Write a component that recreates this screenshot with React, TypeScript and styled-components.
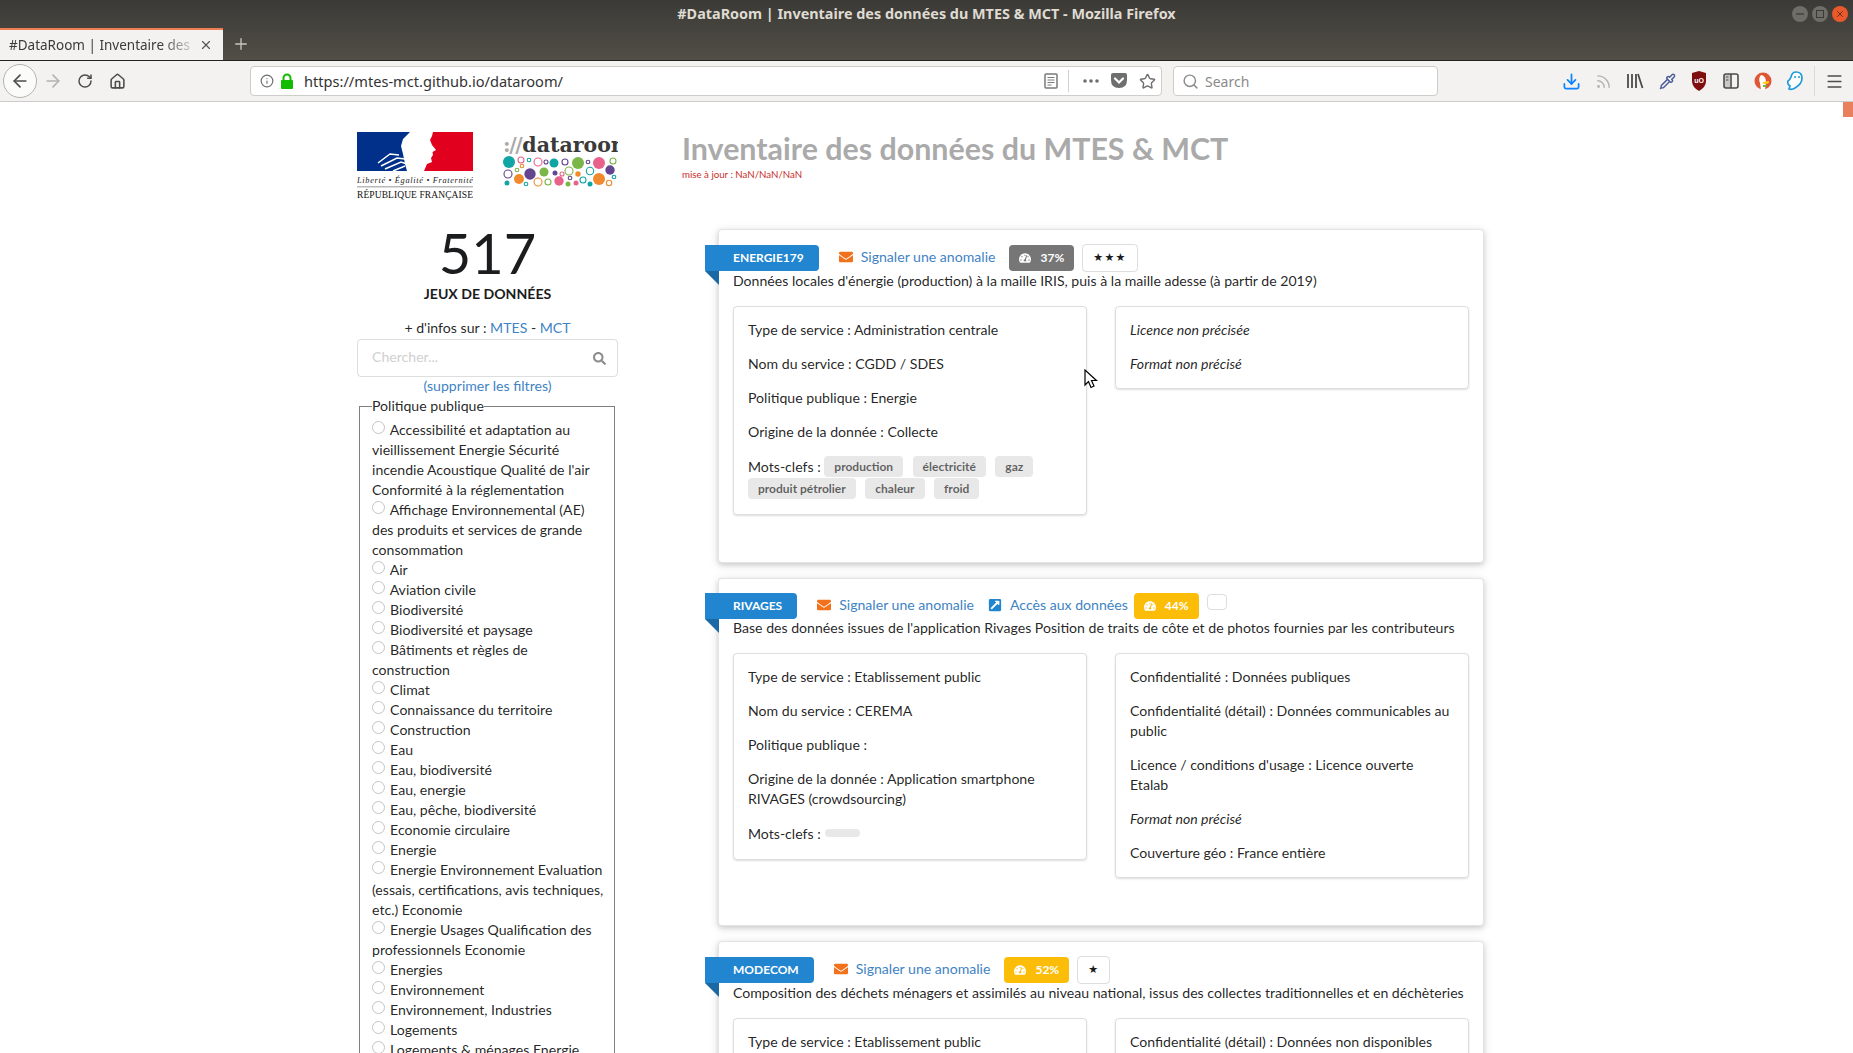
import React from 'react';
import styled, { createGlobalStyle } from 'styled-components';
import { ArrowLeft, ArrowRight, RotateCw, Home, Info, Search, Star, Rss, Menu, X, Plus, Pipette, Download } from 'lucide-react';
import { FaEnvelope, FaExternalLinkSquareAlt, FaSearch, FaTachometerAlt } from 'react-icons/fa';

const GlobalStyle = createGlobalStyle`
  html, body { margin: 0; padding: 0; height: 100%; overflow: hidden; background: #fff; }
  body {
    font-family: Lato, "Helvetica Neue", Arial, sans-serif;
    font-size: 14.1px;
    line-height: 20px;
    color: rgba(0, 0, 0, 0.87);
    text-rendering: optimizeLegibility;
    font-variant-ligatures: common-ligatures;
  }
  * { box-sizing: border-box; }
`;

const Window = styled.div`
  height: 100vh;
  display: flex;
  flex-direction: column;
  overflow: hidden;
`;

const TitleBar = styled.div`
  height: 61px;
  flex: none;
  background: linear-gradient(180deg, #3b3a36 0%, #514e47 100%);
  border-bottom: 1px solid #24231f;
  display: flex;
  flex-direction: column;
`;

const WindowTitleRow = styled.div`
  height: 28px;
  flex: none;
  display: flex;
  align-items: center;
  justify-content: center;
  position: relative;
  font-family: "Noto Sans", sans-serif;
  font-weight: 700;
  font-size: 14.4px;
  color: #dfdbd2;
`;

const WindowButtons = styled.div`
  position: absolute;
  right: 5px;
  top: 6px;
  display: flex;
  gap: 4px;
`;

const WindowButton = styled.span<{ $close?: boolean }>`
  width: 16px;
  height: 16px;
  border-radius: 50%;
  display: flex;
  align-items: center;
  justify-content: center;
  background: ${(p) => (p.$close ? '#e9592b' : '#6f6d67')};
  color: ${(p) => (p.$close ? '#5a2410' : '#3a3934')};
`;

const TabStrip = styled.div`
  flex: 1;
  display: flex;
  align-items: stretch;
`;

const Tab = styled.div`
  width: 223px;
  border-top: 2px solid #f07e54;
  background: #f3f2f0;
  display: flex;
  align-items: center;
  padding-left: 9px;
  font-family: "Noto Sans", sans-serif;
  font-size: 13.5px;
  color: #3c3b37;
  position: relative;
`;

const TabText = styled.span`
  width: 190px;
  white-space: nowrap;
  overflow: hidden;
  -webkit-mask-image: linear-gradient(90deg, #000 80%, transparent 100%);
  mask-image: linear-gradient(90deg, #000 80%, transparent 100%);
`;

const NewTab = styled.span`
  width: 36px;
  display: flex;
  align-items: center;
  justify-content: center;
  color: #c9c6be;
`;

const Toolbar = styled.div`
  height: 41px;
  flex: none;
  background: #f3f2f0;
  border-bottom: 1px solid #ccc;
  display: flex;
  align-items: center;
  padding-left: 3px;
  color: #4c4c4c;
`;

const BackButton = styled.span`
  width: 34px;
  height: 34px;
  border-radius: 50%;
  border: 1px solid #b5b3b0;
  background: #fbfbfa;
  display: flex;
  align-items: center;
  justify-content: center;
`;

const Slot = styled.span<{ $muted?: boolean; $blue?: boolean }>`
  width: 32px;
  height: 32px;
  flex: none;
  display: flex;
  align-items: center;
  justify-content: center;
  color: ${(p) => (p.$blue ? '#0a84ff' : p.$muted ? '#b5b3b0' : '#4c4c4c')};
`;

const UrlBar = styled.div`
  width: 912px;
  height: 30px;
  margin-left: 117px;
  background: #fff;
  border: 1px solid #cfcdca;
  border-radius: 4px;
  display: flex;
  align-items: center;
  padding-left: 9px;
  font-family: "Noto Sans", sans-serif;
  font-size: 14.6px;
  color: #333;
`;

const UrlText = styled.span`
  margin-left: 4px;
  flex: 1;
`;

const UrlIcon = styled.span<{ $w: number }>`
  width: ${(p) => p.$w}px;
  flex: none;
  display: flex;
  align-items: center;
  justify-content: center;
  color: #6f6f6f;
`;

const UrlSeparator = styled.span`
  width: 1px;
  height: 22px;
  margin: 0 8px;
  background: #d3d1ce;
`;

const SearchBar = styled.div`
  width: 265px;
  height: 30px;
  margin-left: 11px;
  background: #fff;
  border: 1px solid #cfcdca;
  border-radius: 4px;
  display: flex;
  align-items: center;
  gap: 6px;
  padding: 1px 0 0 8px;
  font-family: "Noto Sans", sans-serif;
  font-size: 14px;
  color: #8a8a8a;
`;

const ToolbarIcons = styled.div`
  margin-left: 117px;
  display: flex;
  align-items: center;
`;

const ToolbarSeparator = styled.span`
  width: 1px;
  height: 30px;
  margin: 0 3px 0 3px;
  background: #dcdad7;
`;

const Page = styled.div`
  flex: 1;
  min-height: 0;
  overflow: hidden;
  position: relative;
  display: flex;
  align-items: flex-start;
  padding: 30px 0 0 357px;
`;

const ScrollThumb = styled.div`
  position: absolute;
  right: 0;
  top: 0;
  width: 10px;
  height: 15px;
  background: #e8805e;
`;

const PointerArrow = styled.svg`
  position: absolute;
  left: 1084px;
  top: 267px;
`;

const Sidebar = styled.aside`
  width: 261px;
  flex: none;
`;

const LogoRow = styled.div`
  height: 69px;
  display: flex;
  gap: 30px;
`;

const DataroomLogo = styled.div`
  width: 115px;
  overflow: hidden;
`;

const DataroomName = styled.div`
  font-family: "DejaVu Serif", serif;
  font-weight: 700;
  font-size: 20.5px;
  line-height: 24px;
  padding-top: 1px;
  margin-bottom: -1px;
  white-space: nowrap;
  color: #3a3a3a;
  span { color: #aaa; letter-spacing: -1.4px; margin-right: 1px; }
`;

const StatValue = styled.div`
  margin-top: 24px;
  text-align: center;
  font-size: 56px;
  line-height: 56px;
  color: #1b1c1d;
`;

const StatLabel = styled.div`
  margin-top: 3px;
  text-align: center;
  font-weight: 700;
  line-height: 20px;
  color: #1b1c1d;
`;

const InfoLine = styled.div`
  margin-top: 14px;
  text-align: center;
`;

const Anchor = styled.a`
  color: #4183c4;
  text-decoration: none;
`;

const SearchField = styled.div`
  margin-top: 1px;
  height: 38px;
  border: 1px solid rgba(34, 36, 38, 0.15);
  border-radius: 4px;
  display: flex;
  align-items: center;
  justify-content: space-between;
  padding: 0 11px 0 14px;
  color: #8d8d8d;
`;

const Placeholder = styled.span`
  margin-top: -2px;
  color: #d0d0d0;
`;

const ClearFilters = styled.div`
  margin-top: -1px;
  text-align: center;
`;

const FilterSet = styled.fieldset`
  margin: 0 3px 0 2px;
  padding: 4px 10px 0 12px;
  border: 1px solid #808080;
  border-bottom: none;
  min-width: 0;
`;

const FilterLegend = styled.legend`
  padding: 0;
  line-height: 20px;
`;

const FilterLabel = styled.label`
  display: block;
`;

const Radio = styled.input.attrs({ type: 'radio' })`
  appearance: none;
  width: 13px;
  height: 13px;
  margin: 0 1.5px 0 0;
  border: 1px solid #c4c4c4;
  border-radius: 50%;
  background: #fff;
  vertical-align: 1px;
`;

const Main = styled.main`
  margin-left: 64px;
  width: 801px;
  flex: none;
`;

const PageTitle = styled.h1`
  margin: -2px 0 0;
  font-size: 30.4px;
  line-height: 36px;
  font-weight: 700;
  color: #aaa;
  white-space: nowrap;
`;

const Updated = styled.div`
  margin-top: 2px;
  font-size: 9.7px;
  line-height: 12px;
  color: #c9302c;
`;

const CardList = styled.div`
  margin: 49px 0 0 36px;
  display: flex;
  flex-direction: column;
  gap: 15px;
`;

const Card = styled.section`
  background: #fff;
  border-radius: 4px;
  border: 1px solid rgba(34, 36, 38, 0.12);
  box-shadow: 0 2px 4px 0 rgba(34, 36, 38, 0.12), 0 2px 10px 0 rgba(34, 36, 38, 0.15);
  padding: 14px 14px 47px;
  width: 766px;
`;

const CardHeader = styled.div`
  display: flex;
  align-items: center;
`;

const Ribbon = styled.div`
  position: relative;
  flex: none;
  margin: 0 20px 0 -28px;
  height: 26px;
  padding: 0 15px 0 28px;
  display: flex;
  align-items: center;
  background: #2185d0;
  color: #fff;
  font-size: 12px;
  font-weight: 700;
  border-radius: 0 4px 4px 0;

  &::after {
    content: '';
    position: absolute;
    left: 0;
    top: 100%;
    border-style: solid;
    border-width: 0 14px 14px 0;
    border-color: transparent #1a69a4 transparent transparent;
  }
`;

const HeaderLink = styled.a<{ $tight?: boolean }>`
  display: flex;
  align-items: center;
  gap: 8px;
  margin-top: -2px;
  margin-right: ${(p) => (p.$tight ? 6 : 14)}px;
  color: #4183c4;
  text-decoration: none;
  white-space: nowrap;
`;

const ScoreLabel = styled.span<{ $level: 'low' | 'mid' }>`
  height: 26px;
  padding: 0 10px;
  display: flex;
  align-items: center;
  gap: 9px;
  margin-right: 8px;
  border-radius: 4px;
  font-size: 12px;
  font-weight: 700;
  color: #fff;
  background: ${(p) => (p.$level === 'low' ? '#767676' : '#fbbd08')};
`;

const StarBox = styled.span`
  height: 28px;
  padding: 0 10px;
  display: flex;
  align-items: center;
  border: 1px solid rgba(34, 36, 38, 0.15);
  border-radius: 4px;
  font-size: 11px;
  letter-spacing: 1.3px;
  font-family: "DejaVu Sans", sans-serif;
  color: #1b1c1d;
`;

const EmptyStarBox = styled.span`
  width: 20px;
  height: 16px;
  align-self: flex-start;
  margin-top: 1px;
  border: 1px solid rgba(34, 36, 38, 0.15);
  border-radius: 4px;
`;

const Description = styled.div`
  margin-top: -1px;
  white-space: nowrap;
`;

const Panels = styled.div`
  margin-top: 15px;
  display: grid;
  grid-template-columns: 354px 354px;
  gap: 28px;
  align-items: start;
`;

const Panel = styled.div`
  border: 1px solid rgba(34, 36, 38, 0.15);
  border-radius: 4px;
  box-shadow: 0 1px 2px 0 rgba(34, 36, 38, 0.15);
  padding: 13px 14px 14px;
`;

const Line = styled.p<{ $italic?: boolean }>`
  margin: 0 0 14px;
  font-style: ${(p) => (p.$italic ? 'italic' : 'normal')};
  &:last-child { margin-bottom: 0; }
`;

const TagLine = styled.div`
  line-height: 22px;
`;

const Tag = styled.span<{ $empty?: boolean }>`
  display: inline-block;
  vertical-align: top;
  height: ${(p) => (p.$empty ? '8px' : '21px')};
  width: ${(p) => (p.$empty ? '35px' : 'auto')};
  margin: ${(p) => (p.$empty ? '6px 10px 0 1px' : '0 9.5px 1px 0')};
  padding: 0 10px;
  line-height: 21px;
  border-radius: 4px;
  background: #e8e8e8;
  color: rgba(0, 0, 0, 0.6);
  font-size: 12px;
  font-weight: 700;
`;

const FILTERS = [
  'Accessibilité et adaptation au vieillissement Energie Sécurité incendie Acoustique Qualité de l\'air Conformité à la réglementation',
  'Affichage Environnemental (AE) des produits et services de grande consommation',
  'Air',
  'Aviation civile',
  'Biodiversité',
  'Biodiversité et paysage',
  'Bâtiments et règles de construction',
  'Climat',
  'Connaissance du territoire',
  'Construction',
  'Eau',
  'Eau, biodiversité',
  'Eau, energie',
  'Eau, pêche, biodiversité',
  'Economie circulaire',
  'Energie',
  'Energie Environnement Evaluation (essais, certifications, avis techniques, etc.) Economie',
  'Energie Usages Qualification des professionnels Economie',
  'Energies',
  'Environnement',
  'Environnement, Industries',
  'Logements',
  'Logements & ménages Energie',
];

// x, y, r in the logo's pixels; f = filled, otherwise a ring
const DOTS: [number, number, number, string, boolean][] = [
  [6, 6, 6, '#12a5a5', true], [18, 4, 3, '#e9628b', false], [26, 4, 1.8, '#12a5a5', false], [35, 6, 4, '#e9628b', false],
  [43, 6, 2, '#64458f', false], [51, 7, 4.5, '#12a5a5', true], [62, 6, 3, '#64458f', false], [75, 7, 6, '#7ab648', true],
  [85, 6, 1.8, '#64458f', false], [96, 7, 6, '#e9628b', true], [110, 5, 3, '#7ab648', false], [5, 18, 4, '#64458f', false],
  [14, 14, 1.8, '#7ab648', false], [19, 10, 1.8, '#f08a2d', false], [27, 18, 5.7, '#64458f', true], [41, 16, 4.5, '#7ab648', true],
  [52, 17, 2.5, '#64458f', true], [59, 18, 2, '#e9628b', false], [66, 15, 4, '#7ab648', false], [75, 18, 2.7, '#f08a2d', true],
  [87, 15, 3.7, '#12a5a5', false], [107, 14, 4.7, '#64458f', true], [4, 27, 2.5, '#12a5a5', true], [16, 23, 5, '#f08a2d', true],
  [23, 28, 1.8, '#12a5a5', false], [35, 26, 4, '#f08a2d', false], [45, 26, 3, '#7ab648', false], [56, 25, 4.7, '#e9628b', true],
  [67, 22, 1.8, '#64458f', false], [65, 28, 2.5, '#7ab648', true], [73, 27, 2.5, '#e9628b', true], [80, 24, 3, '#12a5a5', false],
  [87, 28, 2.5, '#12a5a5', true], [96, 23, 6, '#f08a2d', true], [111, 21, 1.8, '#12a5a5', false], [106, 27, 2.7, '#f08a2d', false],
];

const Marianne = () => (
  <svg width="116" height="69" viewBox="0 0 116 69">
    <rect x="0" y="0" width="60" height="39" fill="#00308a" />
    <rect x="60" y="0" width="56" height="39" fill="#e2001f" />
    <path d="M53 0 H76 L75 4 L73 8 L75 13 L79 18 L75.500 20 L76 23 L74 26 L75 30 L70 32 L67 39 H50 L48 32 L46 22 L44 14 L46 7 Z" fill="#fff" />
    <path d="M21 31 L33 22 L42 23 M24 34 L40 26 L48 27 M28 37 L44 30 L50 32 M36 39 L48 34" stroke="#fff" strokeWidth="1.500" fill="none" />
    <text x="0" y="51" fontFamily="'Liberation Serif', serif" fontStyle="italic" fontSize="8.300" textLength="116" fill="#222">Liberté • Égalité • Fraternité</text>
    <rect x="0" y="54" width="116" height="1.500" fill="#b9b9b9" />
    <text x="0" y="66" fontFamily="'Liberation Serif', serif" fontSize="9.500" textLength="116" fill="#111">RÉPUBLIQUE FRANÇAISE</text>
  </svg>
);

const Dots = () => (
  <svg width="115" height="32" viewBox="0 0 115 32">
    {DOTS.map(([x, y, r, c, f], i) => (
      <circle key={i} cx={x} cy={y} r={r} fill={f ? c : 'none'} stroke={f ? 'none' : c} strokeWidth={f ? 0 : 1.100} />
    ))}
  </svg>
);

const LockIcon = () => (
  <svg width="14" height="16" viewBox="0 0 14 16">
    <path d="M3.500 8 V5 A3.500 3.500 0 0 1 10.500 5 V8" fill="none" stroke="#12bc00" strokeWidth="2" />
    <rect x="1" y="7" width="12" height="9" rx="1" fill="#12bc00" />
  </svg>
);

const ReaderIcon = () => (
  <svg width="14" height="16" viewBox="0 0 14 16">
    <rect x="1" y="1" width="12" height="14" rx="1" fill="none" stroke="#7a7a7a" strokeWidth="1.500" />
    <path d="M3.500 4.500h7M3.500 7h7M3.500 9.500h7M3.500 12h4" stroke="#7a7a7a" strokeWidth="1" />
  </svg>
);

const PocketIcon = () => (
  <svg width="18" height="16" viewBox="0 0 18 16">
    <path d="M1 1.500 Q1 0 3 0 H15 Q17 0 17 1.500 V7 Q17 15 9 15 Q1 15 1 7 Z" fill="#6f6f6f" />
    <path d="M5 5.500 L9 9.500 L13 5.500" fill="none" stroke="#fff" strokeWidth="2.200" strokeLinecap="round" />
  </svg>
);

const LibraryIcon = () => (
  <svg width="18" height="16" viewBox="0 0 18 16">
    <path d="M2 1v14M6 1v14M10 1v14M12 1l4.500 14" stroke="#4c4c4c" strokeWidth="1.800" fill="none" />
  </svg>
);

const ShieldIcon = () => (
  <svg width="16" height="20" viewBox="0 0 16 20">
    <path d="M8 0 L15 2 V10 Q15 16 8 20 Q1 16 1 10 V2 Z" fill="#7f0e0e" />
    <text x="8" y="12" textAnchor="middle" fontFamily="'Liberation Sans', sans-serif" fontWeight="700" fontSize="7" fill="#fff">uO</text>
  </svg>
);

const SidebarIcon = () => (
  <svg width="16" height="16" viewBox="0 0 16 16">
    <rect x="1" y="1" width="14" height="14" rx="2" fill="none" stroke="#4c4c4c" strokeWidth="1.600" />
    <rect x="1" y="1" width="6" height="14" fill="#4c4c4c" opacity="0.25" />
    <path d="M8 1v14" stroke="#4c4c4c" strokeWidth="1.600" />
    <path d="M3 4h2.500M3 7h2.500" stroke="#4c4c4c" strokeWidth="1.200" />
  </svg>
);

const DuckIcon = () => (
  <svg width="18" height="20" viewBox="0 0 18 20">
    <circle cx="9" cy="10" r="8.500" fill="#de5833" />
    <path d="M7 4 Q12 5 12 11 L11 19 H7 L6 12 Q4 7 7 4 Z" fill="#fff" />
    <path d="M9 11 L15 10 L14.500 12.500 L9 13 Z" fill="#fdd20a" />
    <path d="M9 14 L13 14 L12 16 L9 16 Z" fill="#65bc46" />
  </svg>
);

const GhostIcon = () => (
  <svg width="18" height="20" viewBox="0 0 18 20">
    <path d="M10 1 Q16 1 16 7 Q16 13 9 17 Q6 19 3 18 L4 15 Q1 13 2 10 Q4 9 5 6 Q6 1 10 1 Z" fill="#fff" stroke="#1c9bd8" strokeWidth="1.700" />
    <circle cx="9" cy="6" r="1" fill="#1c9bd8" />
    <circle cx="13" cy="6" r="1" fill="#1c9bd8" />
  </svg>
);

const Browser = () => (
  <>
    <TitleBar>
      <WindowTitleRow>
        #DataRoom | Inventaire des données du MTES &amp; MCT - Mozilla Firefox
        <WindowButtons>
          <WindowButton><svg width="8" height="8"><path d="M0 4h8" stroke="#3a3934" strokeWidth="1.200" /></svg></WindowButton>
          <WindowButton><svg width="8" height="8"><rect x="0.500" y="0.500" width="7" height="7" fill="none" stroke="#3a3934" /></svg></WindowButton>
          <WindowButton $close><X size={10} strokeWidth={2} /></WindowButton>
        </WindowButtons>
      </WindowTitleRow>
      <TabStrip>
        <Tab>
          <TabText>#DataRoom | Inventaire des</TabText>
          <X size={14} strokeWidth={2} color="#555" />
        </Tab>
        <NewTab><Plus size={18} strokeWidth={1.800} /></NewTab>
      </TabStrip>
    </TitleBar>
    <Toolbar>
      <BackButton><ArrowLeft size={20} strokeWidth={2} /></BackButton>
      <Slot $muted><ArrowRight size={20} strokeWidth={2} /></Slot>
      <Slot><RotateCw size={16} strokeWidth={2.200} /></Slot>
      <Slot><Home size={17} strokeWidth={2.200} /></Slot>
      <UrlBar>
        <UrlIcon $w={14}><Info size={14} /></UrlIcon>
        <UrlIcon $w={26}><LockIcon /></UrlIcon>
        <UrlText>https://mtes-mct.github.io/dataroom/</UrlText>
        <UrlIcon $w={18}><ReaderIcon /></UrlIcon>
        <UrlSeparator />
        <UrlIcon $w={28}>
          <svg width="18" height="4"><circle cx="3" cy="2" r="1.800" fill="#6f6f6f" /><circle cx="9" cy="2" r="1.800" fill="#6f6f6f" /><circle cx="15" cy="2" r="1.800" fill="#6f6f6f" /></svg>
        </UrlIcon>
        <UrlIcon $w={28}><PocketIcon /></UrlIcon>
        <UrlIcon $w={28}><Star size={17} strokeWidth={2} /></UrlIcon>
      </UrlBar>
      <SearchBar><Search size={17} />Search</SearchBar>
      <ToolbarIcons>
        <Slot $blue><Download size={19} strokeWidth={2.200} /></Slot>
        <Slot $muted><Rss size={17} /></Slot>
        <Slot><LibraryIcon /></Slot>
        <Slot><Pipette size={17} color="#4a5a9a" /></Slot>
        <Slot><ShieldIcon /></Slot>
        <Slot><SidebarIcon /></Slot>
        <Slot><DuckIcon /></Slot>
        <Slot><GhostIcon /></Slot>
        <ToolbarSeparator />
        <Slot><Menu size={19} strokeWidth={2} /></Slot>
      </ToolbarIcons>
    </Toolbar>
  </>
);

const Filters = () => (
  <FilterSet>
    <FilterLegend>Politique publique</FilterLegend>
    {FILTERS.map((f) => (
      <FilterLabel key={f}><Radio name="politique" /> {f}</FilterLabel>
    ))}
  </FilterSet>
);

const Score = ({ level, value }: { level: 'low' | 'mid'; value: string }) => (
  <ScoreLabel $level={level}><FaTachometerAlt size={12} />{value}</ScoreLabel>
);

const Report = () => (
  <HeaderLink href="#"><FaEnvelope size={14} color="#f2711c" />Signaler une anomalie</HeaderLink>
);

const App: React.FC = () => (
  <Window>
    <GlobalStyle />
    <Browser />
    <Page>
      <Sidebar>
        <LogoRow>
          <Marianne />
          <DataroomLogo>
            <DataroomName><span>://</span>dataroom</DataroomName>
            <Dots />
          </DataroomLogo>
        </LogoRow>
        <StatValue>517</StatValue>
        <StatLabel>JEUX DE DONNÉES</StatLabel>
        <InfoLine>+ d'infos sur : <Anchor href="#">MTES</Anchor> - <Anchor href="#">MCT</Anchor></InfoLine>
        <SearchField><Placeholder>Chercher...</Placeholder><FaSearch size={13} /></SearchField>
        <ClearFilters><Anchor href="#">(supprimer les filtres)</Anchor></ClearFilters>
        <Filters />
      </Sidebar>
      <Main>
        <PageTitle>Inventaire des données du MTES &amp; MCT</PageTitle>
        <Updated>mise à jour : NaN/NaN/NaN</Updated>
        <CardList>
          <Card>
            <CardHeader>
              <Ribbon>ENERGIE179</Ribbon>
              <Report />
              <Score level="low" value="37%" />
              <StarBox>★★★</StarBox>
            </CardHeader>
            <Description>Données locales d'énergie (production) à la maille IRIS, puis à la maille adesse (à partir de 2019)</Description>
            <Panels>
              <Panel>
                <Line>Type de service : Administration centrale</Line>
                <Line>Nom du service : CGDD / SDES</Line>
                <Line>Politique publique : Energie</Line>
                <Line>Origine de la donnée : Collecte</Line>
                <TagLine>
                  Mots-clefs : <Tag>production</Tag><Tag>électricité</Tag><Tag>gaz</Tag><Tag>produit pétrolier</Tag><Tag>chaleur</Tag><Tag>froid</Tag>
                </TagLine>
              </Panel>
              <Panel>
                <Line $italic>Licence non précisée</Line>
                <Line $italic>Format non précisé</Line>
              </Panel>
            </Panels>
          </Card>
          <Card>
            <CardHeader>
              <Ribbon>RIVAGES</Ribbon>
              <Report />
              <HeaderLink href="#" $tight><FaExternalLinkSquareAlt size={14} color="#2185d0" />Accès aux données</HeaderLink>
              <Score level="mid" value="44%" />
              <EmptyStarBox />
            </CardHeader>
            <Description>Base des données issues de l'application Rivages Position de traits de côte et de photos fournies par les contributeurs</Description>
            <Panels>
              <Panel>
                <Line>Type de service : Etablissement public</Line>
                <Line>Nom du service : CEREMA</Line>
                <Line>Politique publique :</Line>
                <Line>Origine de la donnée : Application smartphone RIVAGES (crowdsourcing)</Line>
                <TagLine>Mots-clefs : <Tag $empty /></TagLine>
              </Panel>
              <Panel>
                <Line>Confidentialité : Données publiques</Line>
                <Line>Confidentialité (détail) : Données communicables au public</Line>
                <Line>Licence / conditions d'usage : Licence ouverte Etalab</Line>
                <Line $italic>Format non précisé</Line>
                <Line>Couverture géo : France entière</Line>
              </Panel>
            </Panels>
          </Card>
          <Card>
            <CardHeader>
              <Ribbon>MODECOM</Ribbon>
              <Report />
              <Score level="mid" value="52%" />
              <StarBox>★</StarBox>
            </CardHeader>
            <Description>Composition des déchets ménagers et assimilés au niveau national, issus des collectes traditionnelles et en déchèteries</Description>
            <Panels>
              <Panel>
                <Line>Type de service : Etablissement public</Line>
              </Panel>
              <Panel>
                <Line>Confidentialité (détail) : Données non disponibles</Line>
              </Panel>
            </Panels>
          </Card>
        </CardList>
      </Main>
      <ScrollThumb />
      <PointerArrow width="14" height="20" viewBox="0 0 14 20">
        <path d="M1 1 V16 L4.500 12.500 L7 18.500 L10 17 L7.500 11.500 H12.500 Z" fill="#fff" stroke="#000" strokeWidth="1.200" />
      </PointerArrow>
    </Page>
  </Window>
);

export default App;
